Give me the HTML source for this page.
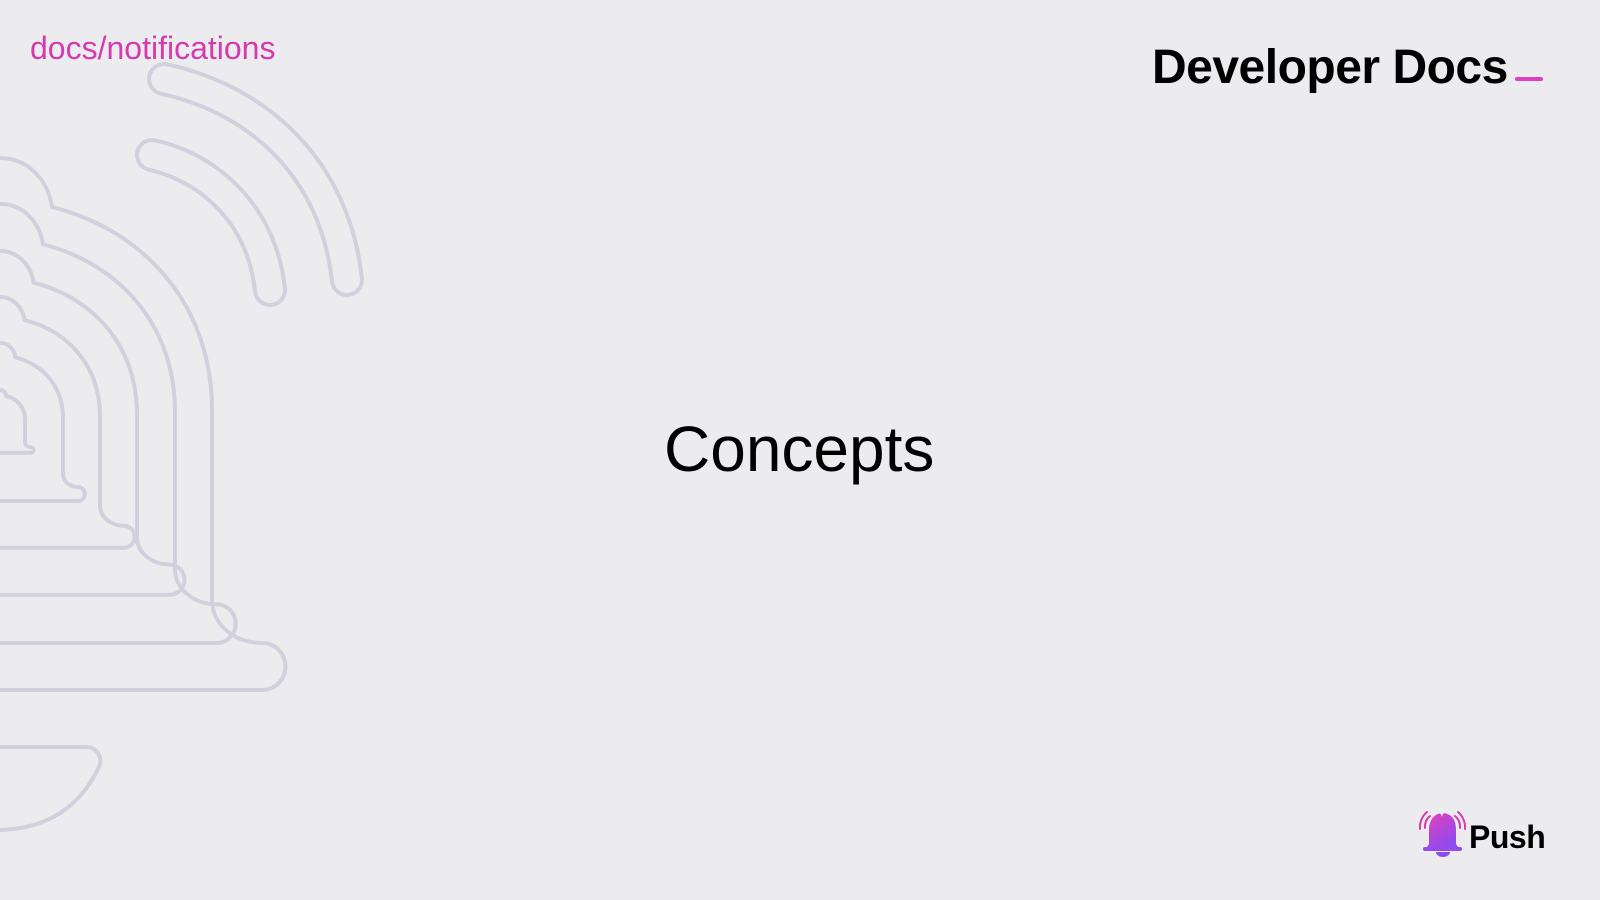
<!DOCTYPE html>
<html><head><meta charset="utf-8"><style>
html,body{margin:0;padding:0;}
body{width:1600px;height:900px;background:#ececef;position:relative;overflow:hidden;font-family:"Liberation Sans",Arial,sans-serif;}
.t{position:absolute;white-space:nowrap;line-height:1;}
</style></head><body>
<svg width="1600" height="900" style="position:absolute;left:0;top:0">
<defs>
<path id="bell" d="M0,158 C28,158 48,180 52,207 C150,232 212,310 212,410 L212,600 C212,625 235,643 262,643 A23.5,23.5 0 0 1 262,690 L-10,690"/>
<linearGradient id="g" x1="0" y1="0" x2="0.6" y2="1"><stop offset="0" stop-color="#e63fb8"/><stop offset="1" stop-color="#8b4cf0"/></linearGradient>
</defs>
<g fill="none" stroke="#d1d0dc" stroke-width="4">
<use href="#bell"/>
<g transform="translate(0,421) scale(0.8255) translate(0,-421)"><use href="#bell" stroke-width="4.85"/></g>
<g transform="translate(0,421) scale(0.6462) translate(0,-421)"><use href="#bell" stroke-width="6.2"/></g>
<g transform="translate(0,421) scale(0.4717) translate(0,-421)"><use href="#bell" stroke-width="8.5"/></g>
<g transform="translate(0,421) scale(0.2972) translate(0,-421)"><use href="#bell" stroke-width="13.5"/></g>
<g transform="translate(0,421) scale(0.1179) translate(0,-421)"><use href="#bell" stroke-width="34"/></g>
<path d="M-10,747 L87,747 A14,14 0 0 1 99,767 Q70,828 0,830"/>
</g>
<g fill="none" stroke-linecap="round">
<path d="M164,79 C260,100 335,170 347,280" stroke="#d1d0dc" stroke-width="34"/>
<path d="M164,79 C260,100 335,170 347,280" stroke="#ececef" stroke-width="26"/>
<path d="M152,155 C210,168 262,215 270,290" stroke="#d1d0dc" stroke-width="34"/>
<path d="M152,155 C210,168 262,215 270,290" stroke="#ececef" stroke-width="26"/>
</g>
<rect x="1515" y="77" width="28" height="4" rx="2" fill="#e040c0"/>
<g>
<path d="M1442,817 C1442,815 1443,814 1443,814 C1444,813 1446,813 1447,814 C1454,816 1456,823 1456,830 L1456,843 C1456,846 1459,847 1460,849 L1425,849 C1426,847 1429,846 1429,843 L1429,830 C1429,823 1432,816 1438,814 C1439,813 1441,813 1442,817 Z" fill="url(#g)"/>
<rect x="1423" y="847" width="39" height="4" rx="2" fill="#9a4ae8"/>
<path d="M1436,852 L1450,852 A7,5 0 0 1 1436,852 Z" fill="#8b4cf0"/>
<g fill="none" stroke="#d63aaf" stroke-width="2" stroke-linecap="round">
<path d="M1425,828 A14,14 0 0 1 1430,816"/><path d="M1420,829 A20,20 0 0 1 1427,812"/>
<path d="M1460,828 A14,14 0 0 0 1455,816"/><path d="M1465,829 A20,20 0 0 0 1458,812"/>
</g>
</g>
</svg>
<div class="t" style="left:30px;top:32px;font-size:32px;color:#d63aaf;">docs/notifications</div>
<div class="t" style="left:1152px;top:44px;font-size:48px;font-weight:bold;color:#000;letter-spacing:-0.5px;">Developer Docs</div>
<div class="t" style="left:664px;top:417px;font-size:64px;color:#000;">Concepts</div>
<div class="t" style="left:1469px;top:821px;font-size:32px;font-weight:bold;color:#000;letter-spacing:-0.5px;">Push</div>
</body></html>
